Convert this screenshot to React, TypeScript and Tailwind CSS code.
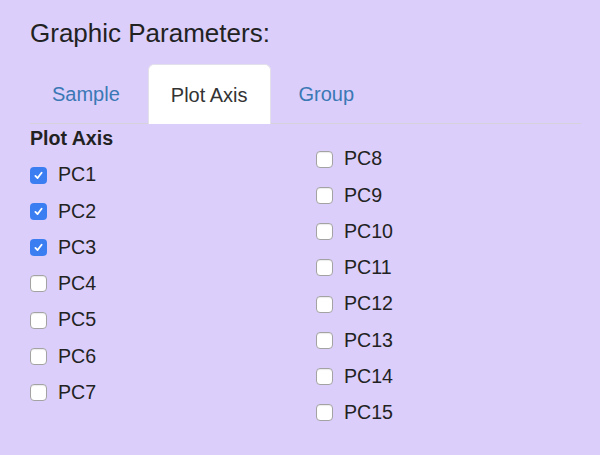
import React from "react";

const left = ["PC1", "PC2", "PC3", "PC4", "PC5", "PC6", "PC7"];
const right = ["PC8", "PC9", "PC10", "PC11", "PC12", "PC13", "PC14", "PC15"];
const checked = ["PC1", "PC2", "PC3"];

function Box({ on }: { on: boolean }) {
  if (on) {
    return (
      <span className="flex h-[17px] w-[17px] shrink-0 items-center justify-center rounded-[4px] bg-[#3b7ef2]">
        <svg width="11" height="11" viewBox="0 0 12 12" fill="none">
          <path d="M2.6 6.4 L5 8.8 L9.4 3" stroke="white" strokeWidth="2" strokeLinecap="round" strokeLinejoin="round" />
        </svg>
      </span>
    );
  }
  return (
    <span className="h-[17px] w-[17px] shrink-0 rounded-[4px] border border-[#a3a3a3] bg-white shadow-[inset_0_1px_1px_rgba(0,0,0,0.08)]" />
  );
}

function Item({ name }: { name: string }) {
  return (
    <div className="flex h-[36.25px] items-center gap-[11px]">
      <Box on={checked.includes(name)} />
      <span className="text-[19.6px] leading-none text-[#222]">{name}</span>
    </div>
  );
}

export default function App() {
  return (
    <div
      className="min-h-[455px] bg-[#dbcefa] pl-[30px] pr-[19px] pt-[19px] text-[#333]"
      style={{ fontFamily: '"Liberation Sans", Arial, sans-serif' }}
    >
      <h4 className="text-[26px] leading-[29px] text-[#222]">Graphic Parameters:</h4>

      <ul className="mt-[16px] flex gap-[6px] border-b border-[#d6d2dc]">
        <li className="-mb-px flex h-[60px] items-center px-[22px] text-[20px] text-[#3a78b5]">Sample</li>
        <li className="-mb-px flex h-[60px] items-center rounded-t-[6px] border border-b-0 border-[#e4e0ea] bg-white px-[22px] text-[20px] text-[#333]">
          Plot Axis
        </li>
        <li className="-mb-px flex h-[60px] items-center px-[22px] text-[20px] text-[#3a78b5]">Group</li>
      </ul>

      <div className="flex">
        <div className="w-[286px]">
          <div className="text-[19.6px] font-bold leading-[28px] text-[#222]">Plot Axis</div>
          <div className="mt-[5px]">
            {left.map((n) => (
              <Item key={n} name={n} />
            ))}
          </div>
        </div>
        <div className="pt-[17px]">
          {right.map((n) => (
            <Item key={n} name={n} />
          ))}
        </div>
      </div>
    </div>
  );
}
